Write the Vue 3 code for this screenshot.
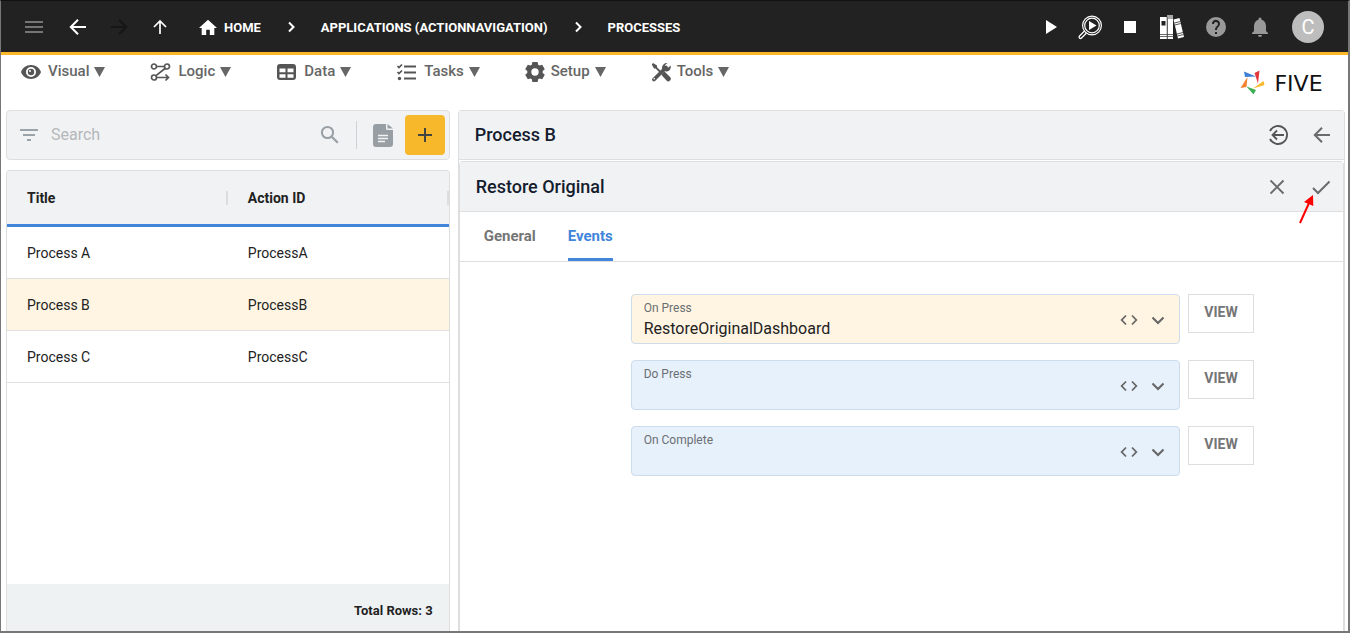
<script setup>
import { ref } from 'vue'

const menus = ['Visual', 'Logic', 'Data', 'Tasks', 'Setup', 'Tools']
const rows = [
  { title: 'Process A', action: 'ProcessA' },
  { title: 'Process B', action: 'ProcessB' },
  { title: 'Process C', action: 'ProcessC' },
]
const selected = ref('ProcessB')
const search = ref('')
const tab = ref('Events')
const fields = ref([
  { id: 'on-press', label: 'On Press', value: 'RestoreOriginalDashboard' },
  { id: 'do-press', label: 'Do Press', value: '' },
  { id: 'on-complete', label: 'On Complete', value: '' },
])
</script>

<template>
  <div class="page">
    <header class="topbar">
      <button class="icon-btn menu-btn" aria-label="Menu">
        <svg width="24" height="24" viewBox="0 0 24 24"><path d="M3 6h18v2H3zM3 11h18v2H3zM3 16h18v2H3z" fill="#757575" /></svg>
      </button>
      <div class="history">
        <button class="icon-btn" aria-label="Back">
          <svg width="24" height="24" viewBox="0 0 24 24"><path d="M20 12H5M12 4.800L4.800 12l7.200 7.200" fill="none" stroke="#fff" stroke-width="2" /></svg>
        </button>
        <button class="icon-btn" aria-label="Forward">
          <svg width="24" height="24" viewBox="0 0 24 24"><path d="M4 12h15M12 4.800L19.200 12 12 19.200" fill="none" stroke="#161616" stroke-width="2" /></svg>
        </button>
        <button class="icon-btn" aria-label="Up">
          <svg width="24" height="24" viewBox="0 0 24 24"><path d="M12 19V6M6 12l6-6 6 6" fill="none" stroke="#fff" stroke-width="1.700" /></svg>
        </button>
      </div>
      <nav class="crumbs" aria-label="Breadcrumb">
        <a href="#" class="home">
          <svg width="18" height="20" viewBox="2 1 20 20"><path d="M10 20v-6h4v6h5v-8h3L12 3 2 12h3v8z" fill="#fff" /></svg>HOME
        </a>
        <svg class="sep" width="20" height="20" viewBox="0 0 20 20"><path d="M8 5.500l4.500 4.500L8 14.500" fill="none" stroke="#fff" stroke-width="2" /></svg>
        <a href="#">APPLICATIONS (ACTIONNAVIGATION)</a>
        <svg class="sep" width="20" height="20" viewBox="0 0 20 20"><path d="M8 5.500l4.500 4.500L8 14.500" fill="none" stroke="#fff" stroke-width="2" /></svg>
        <a href="#">PROCESSES</a>
      </nav>
      <div class="tools">
        <button class="icon-btn" aria-label="Run">
          <svg width="24" height="24" viewBox="0 0 24 24"><path d="M10 5l11 7-11 7z" fill="#fff" /></svg>
        </button>
        <button class="icon-btn" aria-label="Inspect">
          <svg width="26" height="26" viewBox="-1 0 26 26" fill="none" stroke="#fff">
            <circle cx="15" cy="11.500" r="9.400" stroke-width="1.200" /><circle cx="15" cy="11.500" r="7.300" stroke-width="1.200" />
            <path d="M12 7l7.500 4.500L12 16z" fill="#fff" stroke="none" />
            <path d="M7.500 17l-5 5a1.200 1.200 0 0 0 2 2L9.500 19" stroke-width="1.300" />
          </svg>
        </button>
        <button class="icon-btn" aria-label="Stop">
          <svg width="24" height="24" viewBox="0 0 24 24"><path d="M6 6h12v12H6z" fill="#fff" /></svg>
        </button>
        <button class="icon-btn" aria-label="Library">
          <svg width="26" height="26" viewBox="-1 0 26 26">
            <path d="M1 3h7v22H1z" fill="#fff" /><path d="M2.500 7h4v4.500h-4z" fill="#222" />
            <path d="M8.500 1h5.500v24H8.500z" fill="#fff" /><path d="M8.500 1h5.500v4H8.500z" fill="#aaa" />
            <path d="M1 20.500h13M1 22.500h13M8.200 3v22" stroke="#444" stroke-width=".8" />
            <path d="M14.500 5.500l6-1.500 4.500 19-6 1.500z" fill="#fff" />
            <path d="M15.300 9l6-1.500M15.800 11l6-1.500M18 20l6-1.500M18.500 22l6-1.500" stroke="#444" stroke-width=".9" />
          </svg>
        </button>
        <button class="icon-btn" aria-label="Help">
          <svg width="24" height="24" viewBox="0 0 24 24"><path d="M12 2a10 10 0 1 0 0 20 10 10 0 0 0 0-20zm1 17h-2v-2h2zm2.070-7.750l-.9.920C13.450 12.900 13 13.500 13 15h-2v-.5c0-1.100.450-2.100 1.170-2.830l1.240-1.260A2 2 0 1 0 10 9H8a4 4 0 1 1 7.070 2.250z" fill="#999" /></svg>
        </button>
        <button class="icon-btn" aria-label="Notifications">
          <svg width="24" height="24" viewBox="0 0 24 24"><path d="M12 22a2 2 0 0 0 2-2h-4a2 2 0 0 0 2 2zm6-6v-5c0-3.070-1.640-5.640-4.500-6.320V4a1.500 1.500 0 0 0-3 0v.680C7.630 5.360 6 7.920 6 11v5l-2 2v1h16v-1z" fill="#999" /></svg>
        </button>
        <button class="avatar" aria-label="Account">C</button>
      </div>
    </header>

    <div class="menubar">
      <nav class="menus" aria-label="Main">
        <button v-for="m in menus" :key="m" class="menu">
          <svg v-if="m === 'Visual'" width="22" height="20" viewBox="0 0 22 20">
            <path d="M11 3C6 3 2.500 6.200 1 10c1.500 3.800 5 7 10 7s8.500-3.200 10-7c-1.500-3.800-5-7-10-7zm0 12a5 5 0 1 1 0-10 5 5 0 0 1 0 10z" fill="#555" fill-rule="evenodd" />
            <circle cx="11" cy="10" r="3.200" fill="#555" /><circle cx="10" cy="9" r="1" fill="#fff" />
          </svg>
          <svg v-else-if="m === 'Logic'" width="22" height="20" viewBox="0 0 22 20" fill="none" stroke="#555" stroke-width="1.700">
            <circle cx="4" cy="4.500" r="2.500" /><circle cx="17" cy="4.500" r="2.500" /><circle cx="4" cy="15.500" r="2.500" />
            <path d="M6.500 4.500h8M15 6.500L6 13.700M6.500 15.500H18M15.500 12.500l3 3-3 3" />
          </svg>
          <svg v-else-if="m === 'Data'" width="22" height="20" viewBox="0 0 22 20">
            <path fill-rule="evenodd" d="M4 2h13a3 3 0 0 1 3 3v10a3 3 0 0 1-3 3H4a3 3 0 0 1-3-3V5a3 3 0 0 1 3-3zM3.500 6.500v3.800h6V6.500zm8 0v3.800h6V6.500zm-8 5.800v3.500h6v-3.500zm8 0v3.500h6v-3.500z" fill="#555" />
          </svg>
          <svg v-else-if="m === 'Tasks'" width="22" height="20" viewBox="0 0 22 20" fill="none" stroke="#555">
            <path d="M8 4.500h12M8 10.500h12M8 16.500h12" stroke-width="2.200" />
            <path d="M1.500 4l1.500 1.500L6 2.500M1.500 10L3 11.500l3-3" stroke-width="1.700" /><circle cx="3.500" cy="16.500" r="1.700" fill="#555" stroke="none" />
          </svg>
          <svg v-else-if="m === 'Setup'" width="20" height="20" viewBox="2 2 20 20">
            <path fill-rule="evenodd" d="M9.400 2h5.200l.6 2.800 1.300.8 2.700-.9 2.600 4.500-2.100 1.900v1.800l2.100 1.900-2.600 4.500-2.700-.9-1.300.8-.6 2.800H9.400l-.6-2.800-1.300-.8-2.700.9-2.600-4.500 2.100-1.900v-1.800L2.200 9.200l2.600-4.500 2.700.9 1.300-.8zM12 8.300a3.700 3.700 0 1 0 0 7.400 3.700 3.700 0 0 0 0-7.400z" fill="#555" />
          </svg>
          <svg v-else width="20" height="20" viewBox="0 0 20 20">
            <path d="M2 1l4 2.500v1.700l4.300 4.300L9 11 4.600 6.500H3L.8 2.500z" fill="#555" />
            <path d="M11.500 11l2-1.500 5.500 5.500a2.300 2.300 0 0 1-3.500 3.500L10.500 13z" fill="#555" />
            <path d="M3 17.500L15 5.500" stroke="#555" stroke-width="3.800" stroke-linecap="round" />
            <path d="M16.500 1A5 5 0 0 0 11 6.500a4.500 4.500 0 0 0 8.500-3L16.800 6l-2.400-.6-.5-2.200z" fill="#555" />
            <circle cx="3.200" cy="16.800" r=".8" fill="#fff" />
          </svg>
          <span>{{ m }}</span>
          <svg width="11" height="10" viewBox="0 0 11 10"><path d="M0 0h11L5.500 10z" fill="#666" /></svg>
        </button>
      </nav>
      <div class="brand">
        <svg width="26" height="26" viewBox="0 0 26 26">
          <path d="M4 1.500l12 5-11 .5z" fill="#3f7fd6" /><path d="M19.500.5L18 13.500 14.500 3z" fill="#e2373b" />
          <path d="M7.500 7l-1 10L.5 18z" fill="#f58232" /><path d="M13 18.500L23.500 11l1 4z" fill="#fbb829" />
          <path d="M6.500 16.500L16 20l-2.500 4.500z" fill="#3fae55" />
        </svg>
        <span>FIVE</span>
      </div>
    </div>

    <main class="workspace">
      <section class="list">
        <div class="searchbar">
          <button class="icon-btn" aria-label="Filter">
            <svg width="24" height="24" viewBox="0 0 24 24"><path d="M3 6h18v2H3zM6 11h12v2H6zM10 16h4v2h-4z" fill="#9aa3a9" /></svg>
          </button>
          <input v-model="search" type="text" placeholder="Search" aria-label="Search" />
          <button class="icon-btn" aria-label="Search">
            <svg width="24" height="24" viewBox="0 0 24 24" fill="none" stroke="#979fa5" stroke-width="2"><circle cx="9.500" cy="9.500" r="5.600" /><path d="M13.800 13.800l6 6" stroke-width="2.200" /></svg>
          </button>
          <span class="rule"></span>
          <button class="icon-btn" aria-label="Report">
            <svg width="20" height="24" viewBox="0 0 20 24"><path d="M3 1h10v4.500A1.500 1.500 0 0 0 14.500 7H20v14a3 3 0 0 1-3 3H3a3 3 0 0 1-3-3V4a3 3 0 0 1 3-3z" fill="#979fa5" /><path d="M14.500 1L20 5.500h-5.500z" fill="#979fa5" /><path d="M5 12.500h10M5 15.500h10M5 18.500h7" stroke="#f1f2f4" stroke-width="1.400" /></svg>
          </button>
          <button class="add" aria-label="Add">
            <svg width="24" height="24" viewBox="0 0 24 24"><path d="M5 12h14M12 5v14" stroke="#444" stroke-width="2" /></svg>
          </button>
        </div>
        <div class="table-card">
          <table>
            <thead>
              <tr><th scope="col"><div>Title</div></th><th scope="col"><div>Action ID</div></th></tr>
            </thead>
            <tbody>
              <tr v-for="r in rows" :key="r.action" :class="{ active: selected === r.action }" @click="selected = r.action">
                <td>{{ r.title }}</td><td>{{ r.action }}</td>
              </tr>
            </tbody>
          </table>
          <footer>Total Rows: {{ rows.length }}</footer>
        </div>
      </section>

      <section class="detail">
        <div class="head">
          <h1>Process B</h1>
          <button class="icon-btn" aria-label="Exit">
            <svg width="24" height="24" viewBox="0 0 24 24" fill="none" stroke="#555" stroke-width="1.800"><path d="M4 8a9 9 0 1 1 0 8" /><path d="M18 12H7M11 7.500L6.500 12l4.500 4.500" /></svg>
          </button>
          <button class="icon-btn" aria-label="Back to list">
            <svg width="24" height="24" viewBox="0 0 24 24" fill="none" stroke="#6b6b6b" stroke-width="2"><path d="M20 12H5M12 4.800L4.800 12l7.200 7.200" /></svg>
          </button>
        </div>
        <div class="inner">
          <div class="head">
            <h2>Restore Original</h2>
            <button class="icon-btn" aria-label="Cancel">
              <svg width="24" height="24" viewBox="0 0 24 24" stroke="#6b6b6b" stroke-width="1.900"><path d="M5.500 5.500l13 13M18.500 5.500l-13 13" /></svg>
            </button>
            <button class="icon-btn confirm" aria-label="Save">
              <svg width="24" height="24" viewBox="0 0 24 24" fill="none" stroke="#6b6b6b" stroke-width="2"><path d="M4 13l5 5L20.500 6.500" /></svg>
              <svg class="pointer" width="18" height="30" viewBox="0 0 18 30"><path d="M2 29L11 9" stroke="#f00" stroke-width="2" /><path d="M15 1l.3 11L6 8z" fill="#f00" /></svg>
            </button>
          </div>
          <div class="tabs" role="tablist">
            <button v-for="t in ['General', 'Events']" :key="t" role="tab" :aria-selected="tab === t" :class="{ on: tab === t }" @click="tab = t">{{ t }}</button>
          </div>
          <form class="fields" @submit.prevent>
            <div v-for="f in fields" :key="f.id" class="row">
              <div class="field" :class="{ filled: f.value }">
                <label :for="f.id">{{ f.label }}</label>
                <select :id="f.id" v-model="f.value">
                  <option value=""></option>
                  <option>RestoreOriginalDashboard</option>
                </select>
                <div class="adorn">
                  <button type="button" class="icon-btn" aria-label="Edit code">
                    <svg width="18" height="18" viewBox="0 0 18 18" fill="none" stroke="#666" stroke-width="1.800"><path d="M6 4.500L1.700 9 6 13.500M12 4.500L16.300 9 12 13.500" /></svg>
                  </button>
                  <svg width="18" height="18" viewBox="0 0 18 18" fill="none" stroke="#666" stroke-width="2.100"><path d="M3.500 6.500L9 12l5.500-5.500" /></svg>
                </div>
              </div>
              <button type="button" class="view">VIEW</button>
            </div>
          </form>
        </div>
      </section>
    </main>
  </div>
</template>

<style>
body { margin: 0; background: #fff; }
</style>

<style scoped>
* { box-sizing: border-box; }
.page {
  min-height: 100vh;
  display: flex;
  flex-direction: column;
  border: solid #777;
  border-width: 1px 2px 2px 1px;
  border-top-color: #111;
  font-family: Roboto, "Liberation Sans", sans-serif;
  color: #222;
}
button { font: inherit; color: inherit; border: 0; padding: 0; background: none; cursor: pointer; }
svg { display: block; flex: none; }
.icon-btn { display: flex; align-items: center; justify-content: center; flex: none; }

.topbar {
  display: flex;
  align-items: center;
  height: 54px;
  padding: 0 24px 0 21px;
  background: #222;
  border-bottom: 3px solid #fbb829;
  color: #fff;
}
.menu-btn { margin-right: 20px; }
.history { display: flex; gap: 17px; }
.crumbs { display: flex; align-items: center; margin-left: 27px; padding-top: 1px; font-size: 13px; font-weight: 700; }
.crumbs a { display: flex; align-items: center; color: #fff; text-decoration: none; }
.home svg { margin-right: 7px; }
.sep { margin: 0 20px; }
.tools { display: flex; align-items: center; gap: 16px; margin-left: auto; }
.tools .icon-btn:nth-child(n + 5) { margin-left: 4px; }
.avatar { width: 32px; height: 32px; margin-left: 4px; border-radius: 50%; background: #bdbdbd; font-size: 20px; line-height: 32px; }

.menubar { display: flex; justify-content: space-between; height: 55px; padding: 6px 20px 0 19px; }
.menus { display: flex; align-items: flex-start; gap: 45px; }
.menu { display: flex; align-items: center; height: 22px; color: #666; font-size: 15px; font-weight: 500; line-height: 20px; }
.menu span { margin: 0 5px 2px 6px; }
.brand { display: flex; align-items: center; height: 44px; gap: 3px; color: #111; font-family: "DejaVu Sans", sans-serif; font-size: 22px; }
.brand span { width: 59px; text-align: center; }

.workspace { flex: 1; display: grid; grid-template-columns: 1fr 2fr; gap: 8px; padding: 0 3px 0 5px; }
.list { display: flex; flex-direction: column; gap: 10px; min-width: 0; }
.searchbar {
  display: flex;
  align-items: center;
  height: 50px;
  padding: 0 4px 0 10px;
  background: #f1f2f4;
  border: 1px solid #dedede;
  border-radius: 4px;
}
.searchbar input { flex: 1; min-width: 0; margin: 0 8px 0 10px; padding: 0 0 2px; border: 0; outline: 0; background: none; font: 16px Roboto, sans-serif; color: #222; }
.searchbar input::placeholder { color: #b5b8ba; opacity: 1; }
.rule { width: 1px; height: 28px; margin: 0 16px 0 14px; background: #cfd2d4; }
.add { display: flex; align-items: center; justify-content: center; width: 40px; height: 40px; margin-left: 12px; border-radius: 4px; background: #f7b82b; }
.table-card { flex: 1; display: flex; flex-direction: column; border: 1px solid #dedede; border-bottom: 0; border-radius: 4px 4px 0 0; overflow: hidden; }
table { width: 100%; border-collapse: separate; border-spacing: 0; table-layout: fixed; font-size: 14px; text-align: left; }
th { height: 56px; padding: 0; background: #f1f2f4; border-bottom: 3px solid #4186db; font-weight: 700; }
th div { padding-left: 20px; line-height: 14px; border-right: 2px solid #dcdddf; }
td { height: 52px; padding: 0 20px; border-bottom: 1px solid #e0e0e0; }
.active td { background: #fff5e2; }
footer { margin-top: auto; height: 47px; padding: 4px 16px 0 0; background: #eef2f3; font-size: 13px; font-weight: 700; line-height: 46px; text-align: right; }

.detail { display: flex; flex-direction: column; min-width: 0; border: 1px solid #dedede; border-bottom: 0; border-radius: 4px 4px 0 0; }
.head { display: flex; align-items: center; height: 49px; padding: 0 10px 0 16px; gap: 20px; background: #f1f2f4; border-bottom: 1px solid #dedede; }
.inner { flex: 1; margin-top: 1px; border: solid #dedede; border-width: 1px 1px 0; border-radius: 4px 4px 0 0; }
.inner .head { height: 50px; }
h1, h2 { flex: 1; margin: 0; color: #141c2e; font-size: 18px; font-weight: 500; }
h1 { padding-bottom: 1px; }
.confirm { position: relative; }
.pointer { position: absolute; left: -11px; top: 19px; }
.tabs { display: flex; gap: 32px; height: 50px; padding: 0 24px; border-bottom: 1px solid #dedede; }
.tabs button { padding-top: 2px; border-bottom: 3px solid transparent; color: #757575; font-size: 15px; font-weight: 700; }
.tabs .on { color: #4186db; border-color: #4186db; }
.fields { display: flex; flex-direction: column; gap: 16px; padding: 32px 89px 32px 171px; }
.row { display: flex; align-items: flex-start; gap: 8px; }
.field { position: relative; flex: 1; height: 50px; background: #e7f1fc; border: 1px solid #ccdcea; border-radius: 4px; }
.filled { background: #fff5e2; }
.field label { position: absolute; left: 12px; top: 6px; color: #6b6f73; font-size: 12px; line-height: 14px; }
.field select { width: 100%; height: 100%; padding: 18px 70px 0 12px; border: 0; outline: 0; appearance: none; background: none; color: #222; font: 16px Roboto, sans-serif; }
.adorn { position: absolute; right: 12px; top: 16px; display: flex; gap: 11px; pointer-events: none; }
.adorn button { pointer-events: auto; }
.view { width: 66px; height: 39px; padding-bottom: 3px; border: 1px solid #dedede; color: #757575; font-size: 14px; font-weight: 700; }
</style>
